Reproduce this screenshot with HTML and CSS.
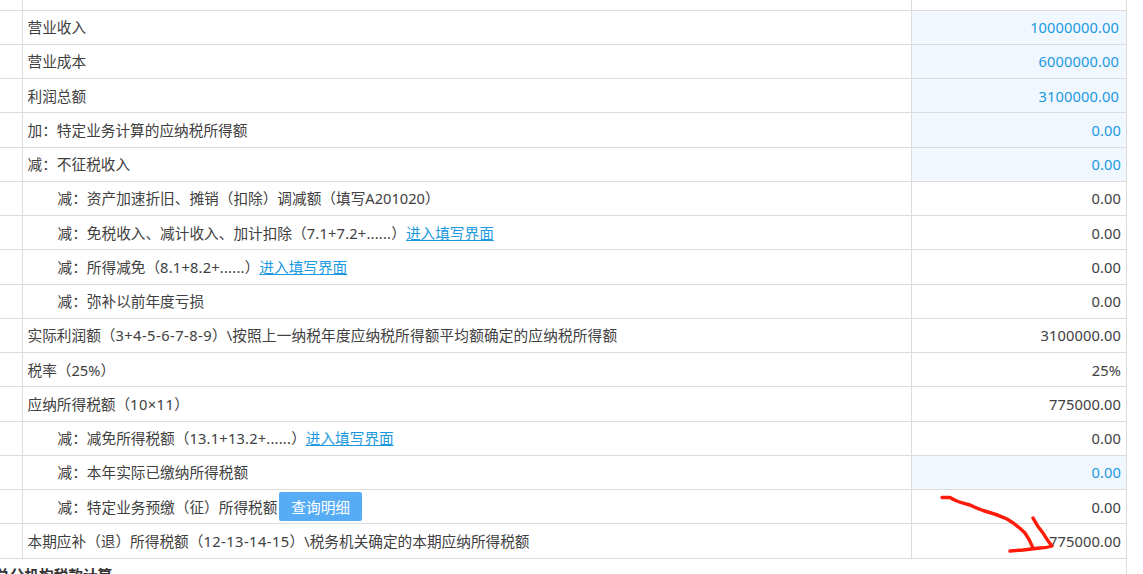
FILE: index.html
```html
<!DOCTYPE html>
<html lang="zh-CN">
<head>
<meta charset="utf-8">
<title>企业所得税预缴申报</title>
<link rel="stylesheet" href="styles.css">
</head>
<body>
<div class="sheet">
  <table class="tax">
    <colgroup><col class="c-num"><col class="c-name"><col class="c-val"></colgroup>
    <tbody>
      <tr class="r-top"><td></td><td></td><td></td></tr>
      <tr><td></td><td>营业收入</td><td class="val edit wide">10000000.00</td></tr>
      <tr><td></td><td>营业成本</td><td class="val edit wide">6000000.00</td></tr>
      <tr><td></td><td>利润总额</td><td class="val edit wide">3100000.00</td></tr>
      <tr><td></td><td>加：特定业务计算的应纳税所得额</td><td class="val edit">0.00</td></tr>
      <tr><td></td><td>减：不征税收入</td><td class="val edit">0.00</td></tr>
      <tr><td></td><td class="sub">减：资产加速折旧、摊销（扣除）调减额（填写A201020）</td><td class="val">0.00</td></tr>
      <tr><td></td><td class="sub">减：免税收入、减计收入、加计扣除（<span class="fs">7.1+7.2+......</span>）<a class="link" href="#">进入填写界面</a></td><td class="val">0.00</td></tr>
      <tr><td></td><td class="sub">减：所得减免（<span class="fs">8.1+8.2+......</span>）<a class="link" href="#">进入填写界面</a></td><td class="val">0.00</td></tr>
      <tr><td></td><td class="sub">减：弥补以前年度亏损</td><td class="val">0.00</td></tr>
      <tr><td></td><td>实际利润额（<span class="f">3+4-5-6-7-8-9</span>）<span class="long">\按照上一纳税年度应纳税所得额平均额确定的应纳税所得额</span></td><td class="val">3100000.00</td></tr>
      <tr><td></td><td>税率（25%）</td><td class="val">25%</td></tr>
      <tr><td></td><td>应纳所得税额（<span class="f">10×11</span>）</td><td class="val">775000.00</td></tr>
      <tr><td></td><td class="sub">减：减免所得税额（<span class="fs">13.1+13.2+......</span>）<a class="link" href="#">进入填写界面</a></td><td class="val">0.00</td></tr>
      <tr><td></td><td class="sub">减：本年实际已缴纳所得税额</td><td class="val edit">0.00</td></tr>
      <tr><td></td><td class="sub">减：特定业务预缴（征）所得税额<button class="btn" type="button">查询明细</button></td><td class="val">0.00</td></tr>
      <tr><td></td><td>本期应补（退）所得税额（<span class="f">12-13-14-15</span>）\税务机关确定的本期应纳所得税额</td><td class="val">775000.00</td></tr>
    </tbody>
  </table>
  <h3 class="next">总分机构税款计算</h3>
</div>
<svg class="scribble" viewBox="0 0 1143 574" aria-hidden="true">
  <path d="M942 497.5 L950 497.5 Q954 500 958 501.5 Q964 503.5 970 505 Q976 508 983 510.5 Q996 514 1007 519 Q1017 525 1025 533 Q1030 540 1033 548"/>
  <path d="M1033 518 Q1037 526 1043 533 Q1047 540 1052 546 Q1046 548 1040 548 Q1031 549 1023 550 L1010 551"/>
</svg>
</body>
</html>
```
FILE: styles.css
```css
html, body {
  margin: 0;
  padding: 0;
  height: 574px;
  overflow: hidden;
  background: #fff;
}
body {
  position: relative;
  font-family: "Noto Sans", "Noto Sans CJK SC", sans-serif;
  font-size: 14.67px;
  color: #404040;
}
.sheet {
  width: 1127px;
  height: 574px;
  border-right: 1px solid #dcdcdc;
  box-sizing: border-box;
  overflow: hidden;
}
.tax {
  width: 100%;
  table-layout: fixed;
  border-collapse: collapse;
}
.c-num { width: 22px; }
.c-val { width: 215px; }
.tax td {
  height: 34.25px;
  padding: 0 5px;
  box-sizing: border-box;
  border: 1px solid #dcdcdc;
  border-right: 0;
  line-height: 20px;
  white-space: nowrap;
}
.tax td:first-child { border-left: 0; }
.tax .r-top td {
  height: 10px;
  border-top: 0;
  padding: 0;
}
.tax .sub { padding-left: 35px; }
.f { letter-spacing: 0.45px; }
.fs { letter-spacing: 0.2px; }
.long { letter-spacing: 0.15px; }
.val { text-align: right; letter-spacing: 0.1px; }
.edit { background: #f0f7fe; color: #1b9ae0; }
.tax .wide { padding-right: 7px; }
.link { color: #1b9ae0; text-decoration: underline; }
.btn {
  height: 29px;
  margin-left: 2px;
  padding: 0 12px;
  border: 0;
  border-radius: 2px;
  background: #56adf6;
  color: #fff;
  font: inherit;
}
.next {
  margin: 6px 0 0 -5px;
  font-size: 14.67px;
  line-height: 20px;
  color: #333;
}
.scribble {
  position: absolute;
  left: 0;
  top: 0;
  width: 1143px;
  height: 574px;
  fill: none;
  stroke: #ff1a0a;
  stroke-width: 3.4;
  stroke-linecap: round;
  stroke-linejoin: round;
  pointer-events: none;
}
```
